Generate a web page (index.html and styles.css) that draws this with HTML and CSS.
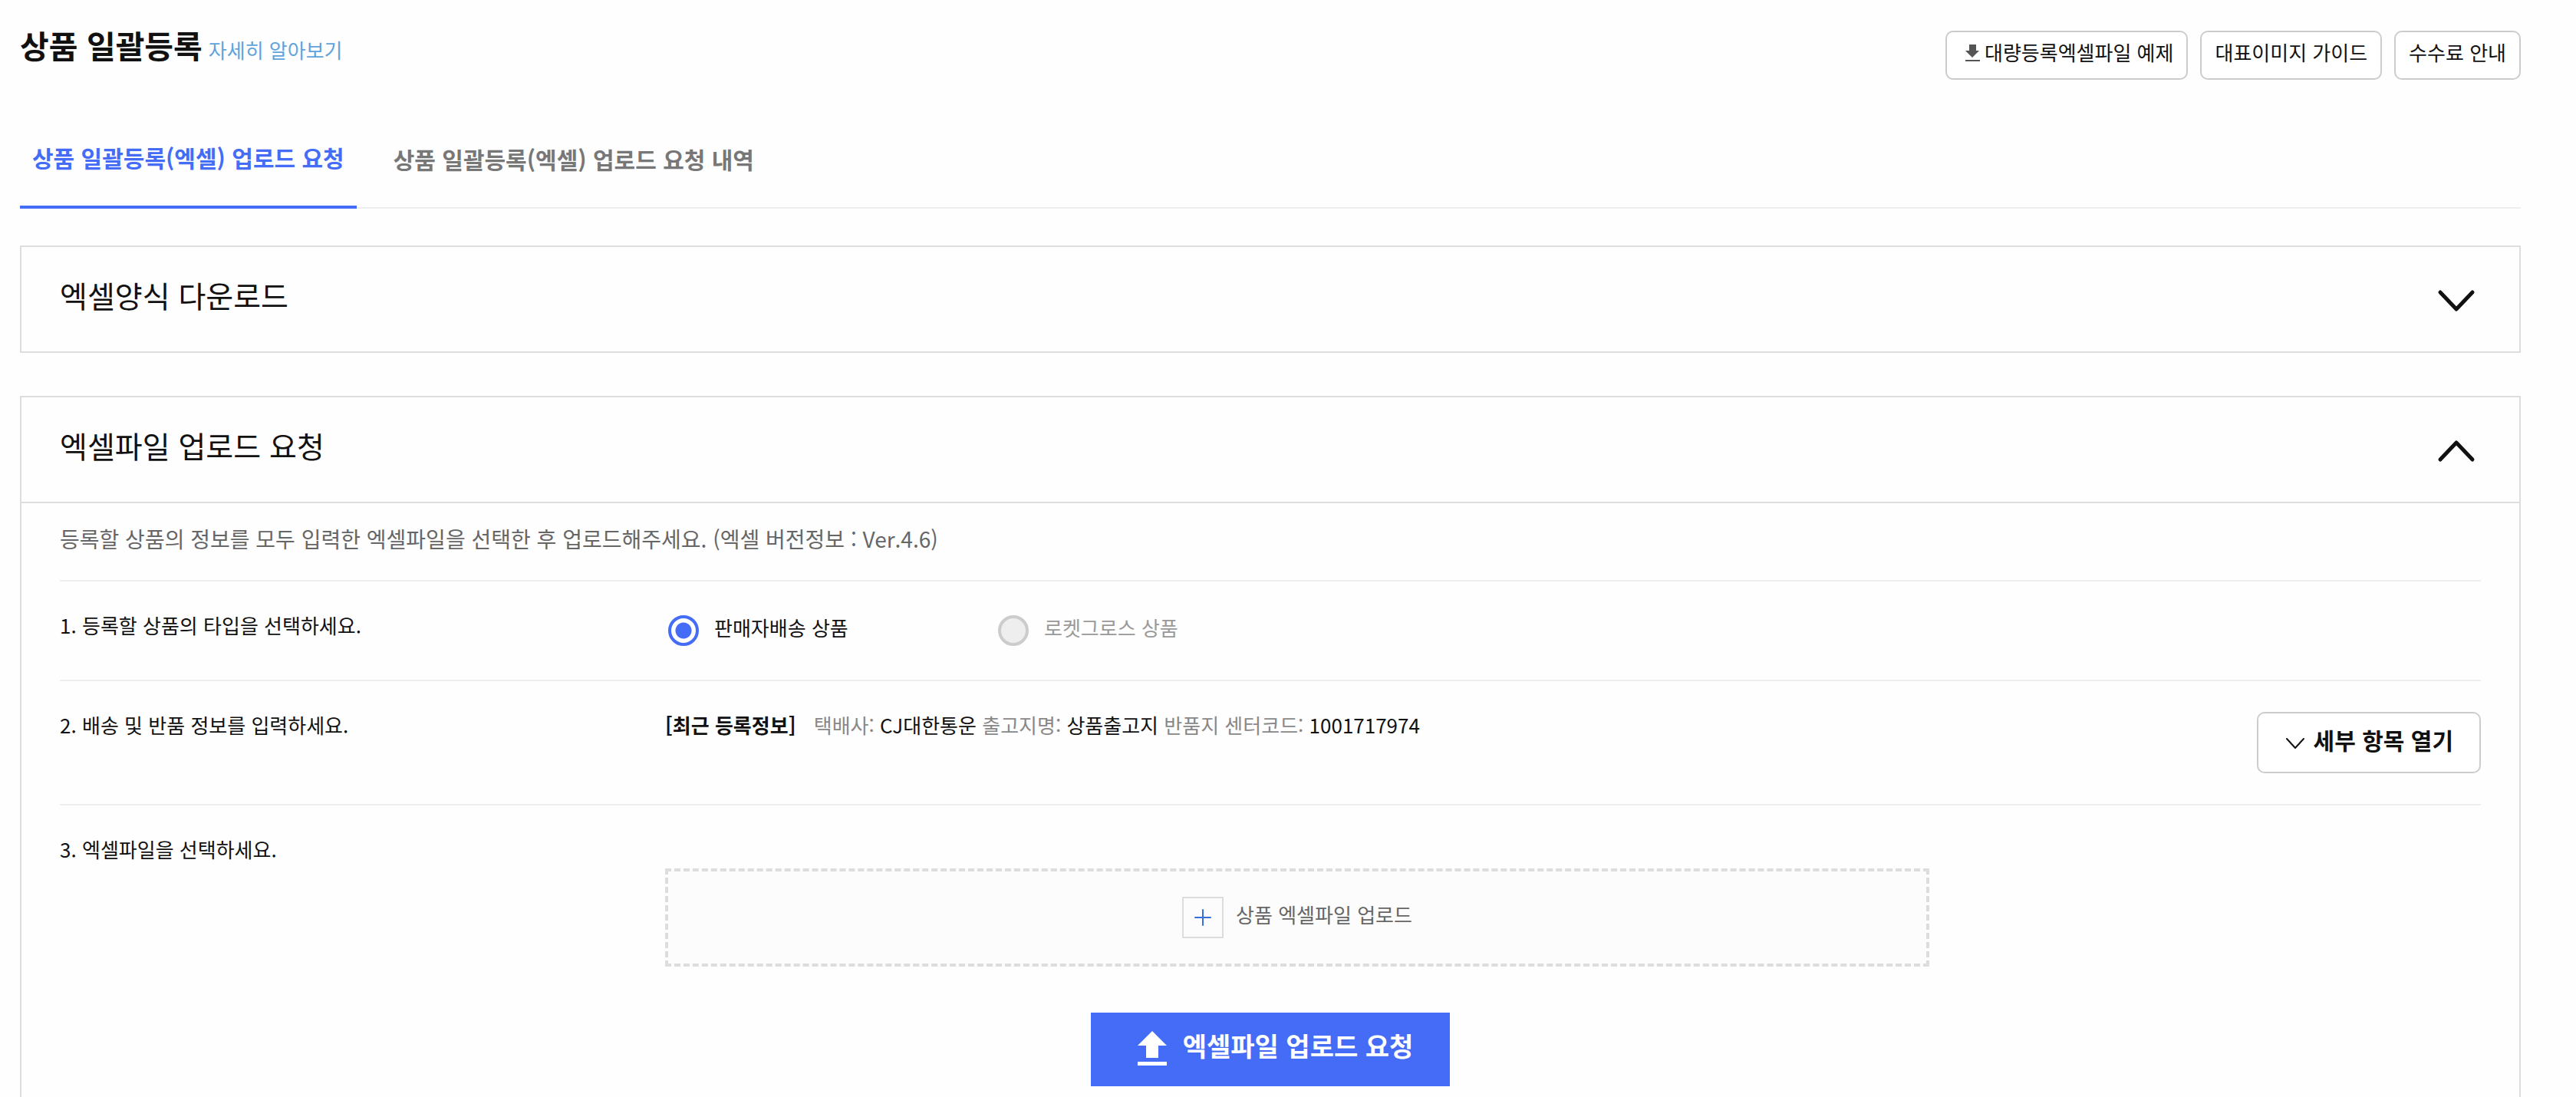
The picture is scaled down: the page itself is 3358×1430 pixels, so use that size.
FILE: index.html
```html
<!DOCTYPE html>
<html lang="ko">
<head>
  <meta charset="UTF-8" />
  <meta name="viewport" content="width=device-width, initial-scale=1" />
  <title>상품 일괄등록</title>
  <link rel="stylesheet" href="styles.css">
</head>
<body>
  <header class="page-header">
    <div class="page-title">
      <h1>상품 일괄등록</h1>
      <a href="#">자세히 알아보기</a>
    </div>
    <div class="header-buttons">
      <button type="button" class="btn-small">
        <svg class="icon-download" viewBox="0 0 20 24" aria-hidden="true"><path d="M6 2h9v8h4l-9 9-9-9h5zM1 22h19v2H1z" fill="#555" /></svg>
        대량등록엑셀파일 예제
      </button>
      <button type="button" class="btn-small">대표이미지 가이드</button>
      <button type="button" class="btn-small">수수료 안내</button>
    </div>
  </header>

  <nav class="tabs">
    <a href="#" class="tab active">상품 일괄등록(엑셀) 업로드 요청</a>
    <a href="#" class="tab">상품 일괄등록(엑셀) 업로드 요청 내역</a>
  </nav>

  <section class="panel">
    <button type="button" class="panel-head" aria-expanded="false">
      엑셀양식 다운로드
      <svg class="icon-toggle" viewBox="0 0 64 44" aria-hidden="true"><path d="M11 11l21 22 21-22" /></svg>
    </button>
  </section>

  <section class="panel open">
    <button type="button" class="panel-head" aria-expanded="true">
      엑셀파일 업로드 요청
      <svg class="icon-toggle" viewBox="0 0 64 44" aria-hidden="true"><path d="M11 33l21-22 21 22" /></svg>
    </button>
    <div class="panel-body">
      <p class="desc">등록할 상품의 정보를 모두 입력한 엑셀파일을 선택한 후 업로드해주세요. (엑셀 버전정보 : Ver.4.6)</p>

      <div class="row">
        <div class="row-label">1. 등록할 상품의 타입을 선택하세요.</div>
        <div class="row-value radios">
          <label class="radio"><input type="radio" name="type" checked />판매자배송 상품</label>
          <label class="radio disabled"><input type="radio" name="type" disabled />로켓그로스 상품</label>
        </div>
      </div>

      <div class="row">
        <div class="row-label">2. 배송 및 반품 정보를 입력하세요.</div>
        <div class="row-value delivery">
          <p class="recent">
            <strong>[최근 등록정보]</strong>
            <span>택배사:</span> CJ대한통운 <span>출고지명:</span> 상품출고지 <span>반품지 센터코드:</span> 1001717974
          </p>
          <button type="button" class="btn-detail">
            <svg class="icon-small" viewBox="0 0 24 24" aria-hidden="true"><path d="M1 11l11 12 11-12" /></svg>
            세부 항목 열기
          </button>
        </div>
      </div>

      <div class="row">
        <div class="row-label">3. 엑셀파일을 선택하세요.</div>
        <div class="row-value file">
          <button type="button" class="dropzone">
            <svg class="icon-plus" viewBox="0 0 50 50" aria-hidden="true"><path d="M15 25h20M25 15v20" /></svg>
            상품 엑셀파일 업로드
          </button>
        </div>
      </div>

      <div class="submit">
        <button type="button" class="btn-upload">
          <svg class="icon-upload" viewBox="0 0 48 48" aria-hidden="true"><path d="M24 0l19 19H32v16H16V19H5zM5 40h38v5H5z" fill="#fff" /></svg>
          엑셀파일 업로드 요청
        </button>
      </div>
    </div>
  </section>
</body>
</html>
```

FILE: styles.css
```css
* { box-sizing:border-box; }
body { margin:0; padding:28px 72px 0 26px; font-family:"Noto Sans CJK KR", sans-serif; font-size:26px; line-height:40px; color:#111; background:#fefefe; }
button { font-family:inherit; font-size:inherit; color:inherit; background:none; border:0; padding:0; cursor:pointer; }
h1, p { margin:0; }
a { text-decoration:none; }
svg { flex:none; fill:none; }

.page-header { display:flex; justify-content:space-between; height:114px; }
.page-title { display:flex; align-items:baseline; gap:8px; }
.page-title h1 { font-size:41px; line-height:60px; }
.page-title a { color:#5fa3dc; }
.header-buttons { display:flex; align-items:flex-start; gap:16px; padding-top:12px; }
.btn-small { display:flex; align-items:center; gap:6px; padding:0 17px 8px; line-height:52px; border:2px solid #ccc; border-radius:10px; background:#fff; }
.icon-download { width:20px; height:24px; margin-left:6px; }

.tabs { display:flex; gap:32px; border-bottom:2px solid #eee; margin-bottom:48px; }
.tab { display:flex; align-items:center; height:130px; margin-bottom:-2px; padding:0 16px; font-size:30px; font-weight:bold; color:#777; }
.tab.active { color:#446cf7; border-bottom:4px solid #446cf7; }

.panel { border:2px solid #ddd; margin-bottom:56px; }
.panel.open { border-bottom:0; margin-bottom:0; }
.panel-head { display:flex; justify-content:space-between; align-items:flex-end; width:100%; padding:32px 50px 44px; font-size:39px; line-height:60px; text-align:left; }
.icon-toggle { width:64px; height:44px; stroke:#111; stroke-width:5; stroke-linecap:round; stroke-linejoin:round; }
.panel-body { border-top:2px solid #ddd; padding:0 50px 14px; }
.desc { padding:24px 0 32px; font-size:28px; line-height:44px; color:#666; }

.row { display:flex; border-top:2px solid #eee; }
.row-label { width:25%; padding-top:37px; }
.row-value { flex:1; }
.radios { display:flex; padding:44px 4px; }
.radio { display:flex; gap:20px; width:430px; line-height:32px; }
.radio input { appearance:none; width:40px; height:40px; margin:0; border:4px solid #446cf7; border-radius:50%; background:radial-gradient(circle, #446cf7 10px, #fff 11px); }
.radio.disabled { color:#999; }
.radio.disabled input { border-color:#ccc; background:#eee; }

.delivery { display:flex; justify-content:space-between; align-items:flex-start; padding:37px 0 40px; }
.recent strong { margin-right:16px; }
.recent span { color:#888; }
.btn-detail { display:flex; align-items:center; gap:12px; margin-top:3px; padding:0 34px 8px 36px; font-size:30px; font-weight:bold; line-height:68px; border:2px solid #ccc; border-radius:10px; background:#fff; }
.icon-small { width:24px; height:24px; stroke:#111; stroke-width:2; stroke-linecap:round; stroke-linejoin:round; }

.file { padding:82px 0 60px; }
.dropzone { display:flex; justify-content:center; gap:16px; width:1648px; max-width:100%; padding:33px 0; line-height:46px; color:#666; border:4px dashed #ddd; background:#fcfcfc; }
.icon-plus { width:54px; height:54px; border:2px solid #ddd; stroke:#346fdc; stroke-width:2; stroke-linecap:round; }

.submit { display:flex; justify-content:center; }
.btn-upload { display:flex; gap:16px; padding:24px 48px 24px 56px; font-size:34px; font-weight:bold; line-height:38px; color:#fff; background:#446cf7; }
.icon-upload { width:48px; height:48px; }
```
